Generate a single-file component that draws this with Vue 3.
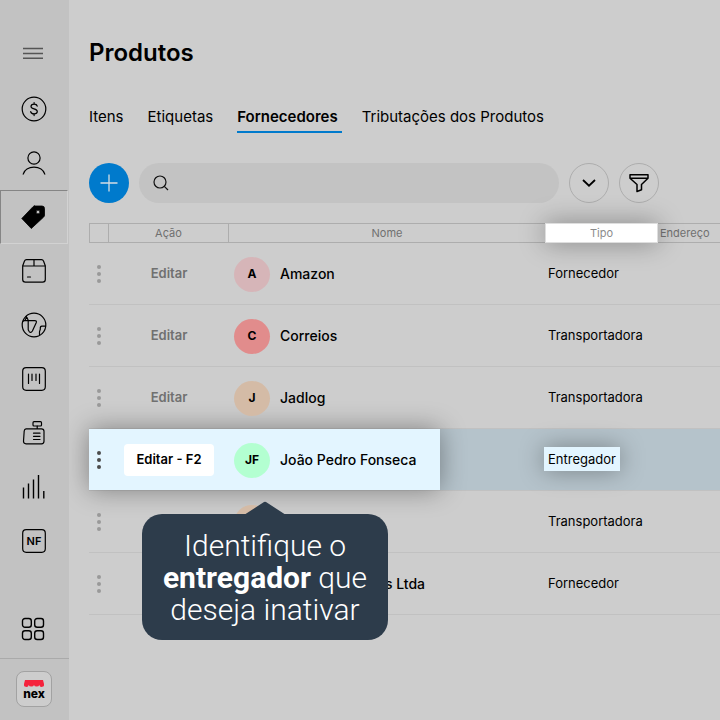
<script setup>
import { ref } from 'vue'

const search = ref('')
const tabs = ['Itens', 'Etiquetas', 'Fornecedores', 'Tributações dos Produtos']
const activeTab = ref('Fornecedores')

const navItems = [
  { id: 'vendas', label: 'Vendas' },
  { id: 'clientes', label: 'Clientes' },
  { id: 'produtos', label: 'Produtos' },
  { id: 'estoque', label: 'Estoque' },
  { id: 'loja', label: 'Loja online' },
  { id: 'codigos', label: 'Códigos' },
  { id: 'caixa', label: 'Caixa' },
  { id: 'relatorios', label: 'Relatórios' },
  { id: 'nf', label: 'Notas fiscais' }
]
const activeNav = ref('produtos')

// Rows behind the tooltip carry only the part that stays in view.
const suppliers = [
  { id: 1, name: 'Amazon', initials: 'A', tone: 'rose', type: 'Fornecedor' },
  { id: 2, name: 'Correios', initials: 'C', tone: 'red', type: 'Transportadora' },
  { id: 3, name: 'Jadlog', initials: 'J', tone: 'peach', type: 'Transportadora' },
  { id: 4, name: 'João Pedro Fonseca', initials: 'JF', tone: 'mint', type: 'Entregador', selected: true },
  { id: 5, name: '', initials: '', tone: 'peach', type: 'Transportadora', covered: true },
  { id: 6, name: 's Ltda', initials: '', tone: 'rose', type: 'Fornecedor', covered: true }
]
</script>

<template>
  <div class="app">
    <aside class="sidebar">
      <button class="nav-item menu" aria-label="Menu">
        <svg width="20" height="12" viewBox="0 0 20 12" fill="none" stroke="#555" stroke-width="1.4">
          <path d="M0 1.5h20M0 6.5h20M0 11.3h20" />
        </svg>
      </button>
      <nav class="nav">
        <button
          v-for="item in navItems"
          :key="item.id"
          class="nav-item"
          :class="{ active: item.id === activeNav }"
          :aria-label="item.label"
          @click="activeNav = item.id"
        >
          <svg width="28" height="28" viewBox="0 0 28 28" fill="none" stroke="#000" stroke-width="1.2" stroke-linecap="round" stroke-linejoin="round">
            <template v-if="item.id === 'vendas'">
              <circle cx="14" cy="14" r="11.8" />
              <path d="M17.2 11.2c-.3-1.3-1.5-2-3.1-2-1.8 0-3.1.9-3.1 2.3 0 3.2 6.3 1.6 6.3 5 0 1.500-1.300 2.400-3.200 2.400-1.900 0-3.200-.8-3.400-2.300M14.100 7.500v1.700M14.100 18.900v1.700" />
            </template>
            <template v-else-if="item.id === 'clientes'">
              <circle cx="14" cy="9" r="6.100" />
              <path d="M3.200 25.200c1.200-4.200 5.500-7 10.800-7s9.600 2.800 10.800 7" />
            </template>
            <template v-else-if="item.id === 'produtos'">
              <path fill="#000" fill-rule="evenodd" d="M14.500 3H22q2.500 0 2.500 2.500V12q0 1.200-.8 2L11.300 25.500 1.800 15.500 13 3.700Q13.700 3 14.500 3ZM18 7.100a1.900 1.900 0 1 0 .01 0Z" stroke-width=".8" />
            </template>
            <template v-else-if="item.id === 'estoque'">
              <path d="M6.500 2.700h15c1.200 0 1.700.5 2.100 1.500l1.700 4.600v13.700q0 2.700-2.700 2.700H5.400q-2.700 0-2.700-2.700V8.800l1.700-4.600c.4-1 .9-1.500 2.100-1.500ZM2.700 9h22.600M14 2.700V9M7.500 20h3" />
            </template>
            <template v-else-if="item.id === 'loja'">
              <circle cx="14" cy="14" r="11.800" />
              <path d="M2.800 10.300c1.800-.2 3.300-1.800 3.600-5.300M7 6.500l1.300 3M3.500 9.700h11.300q2.200 0 1.400 2L12.400 20q-1.500 2.300-3 .9-1.700-1.700-1.200-4V9.800M25.500 15.200h-3.600q-1.800.2-1.600 2.300c.2 1.900-.9 2-.8 3.600v2.300" />
            </template>
            <template v-else-if="item.id === 'codigos'">
              <rect x="2.700" y="2.700" width="22.600" height="22.600" rx="3.500" />
              <path d="M8.500 9v9.500M12 9v6.500M16 9v6.500M19.500 9v9.500" />
            </template>
            <template v-else-if="item.id === 'caixa'">
              <rect x="13" y="2.700" width="8.500" height="4.300" rx="1" />
              <path d="M17.200 7v2.800M6 9.800h15.500q2.500 0 2.500 2.500v10q0 2.500-2.500 2.500H6q-2.500 0-2.500-2.500l.7-10.300Q4.500 9.800 6 9.800ZM13.500 14.200h6.500M13.500 17.300h6.500M13.500 20.500h6.500" />
            </template>
            <template v-else-if="item.id === 'relatorios'">
              <path stroke-linecap="butt" stroke-width="1.400" d="M3.500 14.500v11M8.500 10.500v15M13.500 6.500v19M18.500 2v23.500M23.800 18v7.500" />
            </template>
            <template v-else>
              <rect x="2.700" y="2.700" width="22.600" height="22.600" rx="3.500" />
              <text class="nf" x="14" y="18" text-anchor="middle">NF</text>
            </template>
          </svg>
        </button>
      </nav>
      <button class="nav-item apps" aria-label="Aplicativos">
        <svg width="24" height="24" viewBox="0 0 24 24" fill="none" stroke="#000" stroke-width="1.400">
          <rect x="1.500" y="1.500" width="8.800" height="8.800" rx="2.500" />
          <rect x="13.700" y="1.500" width="8.800" height="8.800" rx="2.500" />
          <rect x="1.500" y="13.700" width="8.800" height="8.800" rx="2.500" />
          <rect x="13.700" y="13.700" width="8.800" height="8.800" rx="2.500" />
        </svg>
      </button>
      <div class="brand">
        <a class="logo" href="#" aria-label="nex">
          <svg width="20" height="7" viewBox="0 0 20 7" fill="#f5223c">
            <path d="M1 0h18l1 4a2.400 2.400 0 0 1-4.700 1 2.700 2 0 0 1-5.300 0 2.700 2 0 0 1-5.300 0A2.400 2.400 0 0 1 0 4Z" />
          </svg>
          <span>nex</span>
        </a>
      </div>
    </aside>

    <main class="main">
      <h1>Produtos</h1>
      <nav class="tabs">
        <a v-for="tab in tabs" :key="tab" href="#" :class="{ current: tab === activeTab }" @click.prevent="activeTab = tab">{{ tab }}</a>
      </nav>

      <div class="toolbar">
        <button class="round add" aria-label="Adicionar">
          <svg width="18" height="18" viewBox="0 0 18 18" fill="none" stroke="#d5dde3" stroke-width="1.300"><path d="M9 .5v17M.5 9h17" /></svg>
        </button>
        <label class="search">
          <svg width="16" height="16" viewBox="0 0 16 16" fill="none" stroke="#111" stroke-width="1.200"><circle cx="7" cy="7" r="6" /><path d="m11.300 11.300 3.700 3.700" /></svg>
          <input v-model="search" type="search" aria-label="Pesquisar" />
        </label>
        <button class="round" aria-label="Mais opções">
          <svg width="14" height="8" viewBox="0 0 14 8" fill="none" stroke="#000" stroke-width="1.800"><path d="m1 1 6 5.700L13 1" /></svg>
        </button>
        <button class="round" aria-label="Filtrar">
          <svg width="20" height="20" viewBox="0 0 20 20" fill="none" stroke="#000" stroke-width="1.500" stroke-linejoin="round"><path d="M1 1.700h18v3.600l-6.500 6.200v5.300L8 18.500v-7L1 5.300ZM1 5.300h18" /></svg>
        </button>
      </div>

      <table class="grid">
        <colgroup>
          <col class="c-menu" />
          <col class="c-action" />
          <col class="c-name" />
          <col class="c-type" />
          <col />
        </colgroup>
        <thead>
          <tr>
            <th></th>
            <th>Ação</th>
            <th>Nome</th>
            <th class="lit">Tipo</th>
            <th class="address">Endereço</th>
          </tr>
        </thead>
        <tbody>
          <tr v-for="row in suppliers" :key="row.id" :class="{ selected: row.selected, covered: row.covered }">
            <td class="menu-cell">
              <button class="dots" aria-label="Opções"><i></i><i></i><i></i></button>
              <div v-if="row.selected" class="tip" role="tooltip">
                <svg class="arrow" width="42" height="14" viewBox="0 0 42 14"><path d="M0 14 20 1q1-.7 2 0l20 13Z" fill="#2d3c4b" /></svg>
                Identifique o<br /><b>entregador</b> que<br />deseja inativar
              </div>
            </td>
            <td class="action-cell">
              <button v-if="!row.covered" class="edit">{{ row.selected ? 'Editar - F2' : 'Editar' }}</button>
            </td>
            <td>
              <div class="person">
                <span class="avatar" :class="row.tone">{{ row.initials }}</span>
                <span class="name">{{ row.name }}</span>
              </div>
            </td>
            <td class="type-cell"><span class="type">{{ row.type }}</span></td>
            <td></td>
          </tr>
        </tbody>
      </table>
    </main>
  </div>
</template>

<style>
body {
  margin: 0;
  background: #cdcdcd;
}
</style>

<style scoped>
* {
  box-sizing: border-box;
}
.app {
  display: flex;
  min-height: 100vh;
  font-family: Inter, "Liberation Sans", sans-serif;
  color: #000;
  background: #cdcdcd;
}
button {
  font: inherit;
  color: inherit;
  padding: 0;
  border: 0;
  background: none;
  cursor: pointer;
}
a {
  color: inherit;
  text-decoration: none;
}
svg {
  display: block;
  flex: none;
}
.sidebar {
  display: flex;
  flex-direction: column;
  flex: none;
  width: 69px;
  padding-top: 26px;
  background: #c2c2c2;
}
.nav {
  display: flex;
  flex-direction: column;
}
.nav-item {
  display: flex;
  align-items: center;
  justify-content: center;
  width: 68px;
  height: 54px;
  border: 1px solid transparent;
}
.menu {
  margin-bottom: 2px;
  padding-right: 2px;
}
.active {
  border-color: #858585 #d2d2d2 #d2d2d2 #858585;
}
.nf {
  font: 600 11px Inter, sans-serif;
  fill: #000;
  stroke: none;
}
.apps {
  height: 58px;
  margin-top: auto;
  padding-right: 2px;
}
.brand {
  display: flex;
  align-items: center;
  height: 62px;
  padding: 0 0 2px 16px;
  border-top: 1px solid #aaa;
}
.logo {
  display: flex;
  flex-direction: column;
  align-items: center;
  width: 36px;
  height: 36px;
  padding-top: 8px;
  border: 1px solid #a2a2a2;
  border-radius: 8px;
  background: #cdcdcd;
  font-size: 12px;
  font-weight: 800;
  line-height: 14px;
}
.main {
  flex: 1;
  min-width: 0;
  padding: 37px 0 36px 20px;
  overflow: hidden;
}
h1 {
  margin: 0;
  font-size: 24px;
  line-height: 32px;
  font-weight: 600;
}
.tabs {
  display: flex;
  gap: 20px;
  margin-top: 38px;
  font-size: 15px;
  line-height: 20px;
  white-space: nowrap;
}
.tabs a {
  padding: 0 4px 4px 0;
  border-bottom: 2px solid transparent;
}
.tabs .current {
  font-weight: 600;
  border-color: #007acc;
}
.toolbar {
  display: flex;
  gap: 10px;
  max-width: 570px;
  margin-top: 30px;
}
.round {
  display: flex;
  align-items: center;
  justify-content: center;
  flex: none;
  width: 40px;
  height: 40px;
  border: 1px solid #adadad;
  border-radius: 50%;
}
.add {
  border: 0;
  background: #007acc;
}
.search {
  display: flex;
  align-items: center;
  flex: 1;
  gap: 10px;
  height: 40px;
  padding: 0 14px;
  border-radius: 20px;
  background: #c3c3c3;
}
.search input {
  flex: 1;
  min-width: 0;
  border: 0;
  outline: 0;
  background: none;
  font: inherit;
  font-size: 14px;
}
.grid {
  width: 100%;
  margin-top: 20px;
  border-spacing: 0;
  table-layout: fixed;
}
.c-menu { width: 19px; }
.c-action { width: 120px; }
.c-name { width: 317px; }
.c-type { width: 113px; }
th {
  height: 20px;
  padding: 0;
  border: 1px solid #adadad;
  border-right: 0;
  color: #707070;
  font-size: 11px;
  line-height: 18px;
  font-weight: 400;
}
th.lit {
  position: relative;
  z-index: 1;
  border: 1px solid #dedede;
  background: #fff;
  color: #8c8c8c;
  box-shadow: 0 0 26px rgba(0, 0, 0, 0.36);
}
th.address {
  padding-left: 2px;
  border-left: 0;
  text-align: left;
}
td {
  height: 62px;
  padding: 0;
  border-bottom: 1px solid #c1c1c1;
  font-size: 13px;
  line-height: 20px;
  white-space: nowrap;
}
.menu-cell {
  position: relative;
}
.dots {
  position: relative;
  z-index: 2;
  display: flex;
  flex-direction: column;
  align-items: center;
  gap: 3px;
  width: 20px;
}
.dots i {
  width: 4px;
  height: 4px;
  border-radius: 50%;
  background: #999;
}
.action-cell {
  padding-left: 2px;
  text-align: center;
}
.edit {
  position: relative;
  z-index: 2;
  height: 32px;
  padding-bottom: 1px;
  color: #707070;
  font-weight: 600;
}
.person {
  position: relative;
  z-index: 2;
  display: flex;
  align-items: center;
  gap: 10px;
  padding: 2px 0 0 6px;
  font-size: 14px;
  font-weight: 500;
}
.name {
  padding-bottom: 2px;
}
.covered .name {
  width: 145px;
  text-align: right;
}
.avatar {
  width: 36px;
  height: 35px;
  border-radius: 50%;
  font-size: 12px;
  line-height: 34px;
  font-weight: 700;
  text-align: center;
}
.rose { background: #d6b5b8; }
.red { background: #e18c8c; }
.peach { background: #d4bba6; }
.mint { background: #b3ffd1; }
.type-cell {
  padding: 0 0 1px 3px;
}
.selected td {
  background: #b5c3cb;
}
.selected .menu-cell::before {
  content: "";
  position: absolute;
  z-index: 1;
  top: 0;
  left: 0;
  width: 351px;
  height: 61px;
  background: #e3f5ff;
  box-shadow: 0 0 26px rgba(0, 0, 0, 0.38);
}
.selected .dots i {
  background: #4c4c4c;
}
.selected .edit {
  width: 90px;
  border-radius: 4px;
  background: #fff;
  color: #000;
}
.selected .type {
  display: inline-block;
  margin-left: -4px;
  padding: 2px 4px;
  background: #e3f5ff;
  box-shadow: 0 0 24px rgba(0, 0, 0, 0.34);
}
.tip {
  position: absolute;
  z-index: 3;
  top: 85px;
  left: 53px;
  width: 246px;
  padding: 16px 10px 14px;
  border-radius: 20px;
  background: #2d3c4b;
  color: #fff;
  font-family: Roboto, "Liberation Sans", sans-serif;
  font-size: 30px;
  line-height: 32px;
  font-weight: 300;
  text-align: center;
}
.tip b {
  font-weight: 700;
}
.arrow {
  position: absolute;
  top: -13px;
  left: 102px;
}
</style>
